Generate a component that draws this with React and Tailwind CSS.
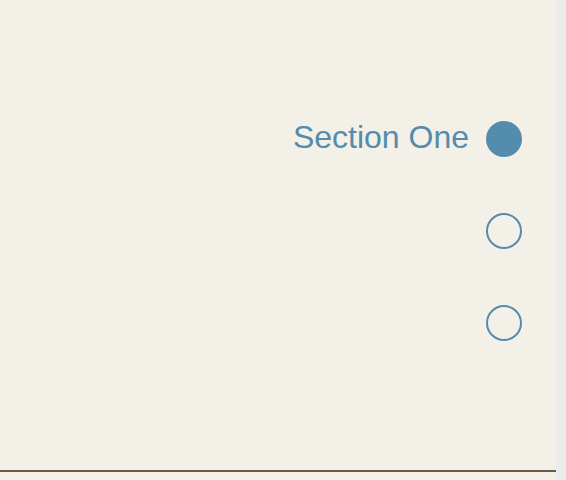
import React from 'react';

const sections = ['Section One', 'Section Two', 'Section Three'];

const App = () => {
  const active = 0;

  return (
    <div className="flex w-[566px] h-[480px] bg-[#f3f0e8] overflow-hidden" style={{ fontFamily: '"Liberation Sans", Arial, sans-serif' }}>
      {/* Main */}
      <div className="flex flex-col w-[556px]">
        <section className="h-[472px] border-b-2 border-[#6b5a46] pt-[121px] pr-[34px]">
          <ul className="flex flex-col gap-[56px]">
            {sections.map((name, i) => (
              <li key={name} className="flex items-center justify-end gap-[17px] h-[36px]">
                {i === active && (
                  <span className="text-[32px] leading-none pb-[5px] text-[#538cad]">{name}</span>
                )}
                <span
                  className={
                    i === active
                      ? 'w-[36px] h-[36px] rounded-full bg-[#538cad]'
                      : 'w-[36px] h-[36px] rounded-full border-2 border-[#538cad]'
                  }
                />
              </li>
            ))}
          </ul>
        </section>
      </div>

      {/* scroll strip */}
      <div className="w-[10px] bg-[#ececec]" />
    </div>
  );
};

export default App;
